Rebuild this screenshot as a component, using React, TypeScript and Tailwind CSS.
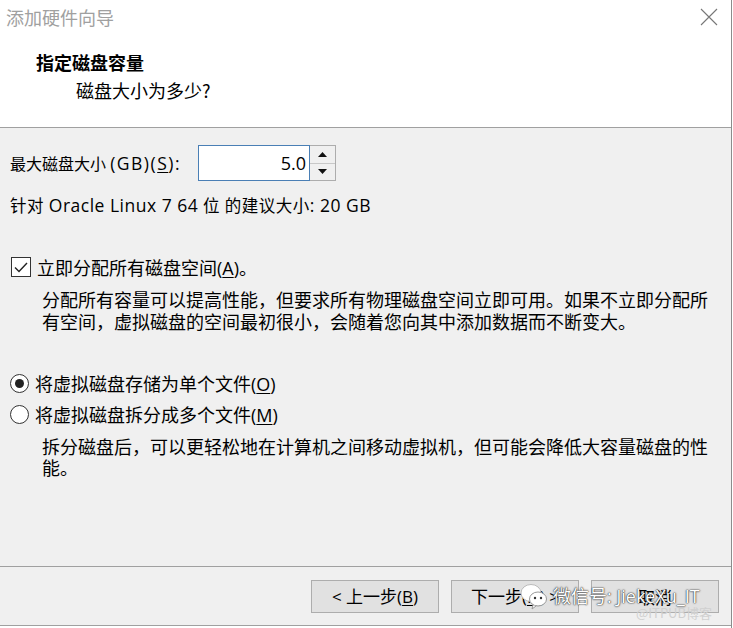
import React from 'react';

const latin = "[font-family:'Open_Sans','Noto_Sans_CJK_SC',sans-serif]";
const cjk = "[font-family:'Noto_Sans_CJK_SC','Open_Sans',sans-serif]";

function Key({ k }: { k: string }) {
  return (
    <span className={latin}>
      (<span className="underline underline-offset-2">{k}</span>)
    </span>
  );
}

function Button({ children }: { children: React.ReactNode }) {
  return (
    <button className="w-[128px] h-[33px] bg-[#e1e1e1] border border-[#adadad] text-[17px] text-black flex items-center justify-center">
      {children}
    </button>
  );
}

export default function App() {
  return (
    <div className={`relative w-[733px] h-[628px] overflow-hidden flex bg-white text-black ${cjk}`}>
      <div className="w-[731px] flex flex-col">
        {/* header */}
        <div className="h-[128px] bg-white border-b border-[#a0a0a0] pt-[5px]">
          <div className="flex items-center justify-between h-[24px] pl-[6px] pr-[12px]">
            <span className="text-[18px] leading-[24px] text-[#a0a0a0]">添加硬件向导</span>
            <svg width="20" height="18" viewBox="0 0 20 18" className="text-[#777]">
              <path d="M2 1 L18 17 M18 1 L2 17" stroke="currentColor" strokeWidth="1.1" fill="none" />
            </svg>
          </div>
          <div className="mt-[21px] ml-[36px] text-[18px] leading-[24px] font-bold">指定磁盘容量</div>
          <div className="mt-[4px] ml-[76px] text-[18px] leading-[24px]">磁盘大小为多少?</div>
        </div>

        {/* body */}
        <div className="h-[438px] bg-[#f0f0f0] pt-[17px]">
          <div className="flex items-center h-[36px]">
            <span className={`ml-[10px] w-[188px] text-[16px] ${latin}`}>
              最大磁盘大小 <span className="text-[17.5px] tracking-[1.5px]">(GB)(<span className="underline underline-offset-2">S</span>):</span>
            </span>
            <div className="flex h-[36px]">
              <div className="w-[112px] h-full bg-white border border-[#4a7fb5] flex items-center justify-end pr-[3px] text-[18px] font-['Open_Sans'] leading-none">
                5.0
              </div>
              <div className="w-[26px] h-full border border-[#adadad] border-l-0 flex flex-col bg-[#f0f0f0]">
                <div className="flex-1 flex items-center justify-center border-b border-[#c8c8c8]">
                  <svg width="9" height="5" viewBox="0 0 9 5"><path d="M4.5 0 L9 5 L0 5 Z" fill="#111" /></svg>
                </div>
                <div className="flex-1 flex items-center justify-center">
                  <svg width="9" height="5" viewBox="0 0 9 5"><path d="M0 0 L9 0 L4.5 5 Z" fill="#111" /></svg>
                </div>
              </div>
            </div>
          </div>

          <div className={`mt-[13px] ml-[10px] text-[16.5px] leading-[22px] tracking-[0.5px] ${latin}`}>
            针对 <span className="text-[17.5px]">Oracle Linux 7 64</span> 位 的建议大小<span className="text-[17.5px]">: 20 GB</span>
          </div>

          <div className="mt-[39px] flex items-center h-[22px]">
            <div className="ml-[11px] w-[20px] h-[20px] border border-[#333] bg-white flex items-center justify-center">
              <svg width="14" height="11" viewBox="0 0 14 11">
                <path d="M1 5.5 L5 9.5 L13 1" stroke="#222" strokeWidth="1.4" fill="none" />
              </svg>
            </div>
            <span className="ml-[6px] text-[18px] leading-[22px]">
              立即分配所有磁盘空间<Key k="A" />。
            </span>
          </div>

          <p className="mt-[10px] ml-[42px] w-[670px] text-[18px] leading-[22px]">
            分配所有容量可以提高性能，但要求所有物理磁盘空间立即可用。如果不立即分配所有空间，虚拟磁盘的空间最初很小，会随着您向其中添加数据而不断变大。
          </p>

          <div className="mt-[40px] flex items-center h-[22px]">
            <div className="ml-[10px] w-[19px] h-[19px] rounded-full border border-[#333] bg-white flex items-center justify-center">
              <div className="w-[9px] h-[9px] rounded-full bg-[#222]" />
            </div>
            <span className="ml-[6px] text-[18px] leading-[22px]">
              将虚拟磁盘存储为单个文件<Key k="O" />
            </span>
          </div>

          <div className="mt-[9px] flex items-center h-[22px]">
            <div className="ml-[10px] w-[19px] h-[19px] rounded-full border border-[#333] bg-white" />
            <span className="ml-[6px] text-[18px] leading-[22px]">
              将虚拟磁盘拆分成多个文件<Key k="M" />
            </span>
          </div>

          <p className="mt-[11px] ml-[42px] w-[670px] text-[18px] leading-[21px]">
            拆分磁盘后，可以更轻松地在计算机之间移动虚拟机，但可能会降低大容量磁盘的性能。
          </p>
        </div>

        {/* footer */}
        <div className="h-[59px] bg-[#f0f0f0] border-t border-[#a0a0a0] pt-[13px] flex justify-end gap-[12px] pr-[12px]">
          <Button>
            <span className={latin}>&lt; 上一步(<span className="underline underline-offset-2">B</span>)</span>
          </Button>
          <Button>
            <span className={latin}>下一步(<span className="underline underline-offset-2">N</span>) &gt;</span>
          </Button>
          <Button>
            <span>取消</span>
          </Button>
        </div>
        <div className="h-px bg-[#a0a0a0]" />
        <div className="flex-1 bg-white" />
      </div>
      <div className="w-px bg-[#8c8c8c]" />
      <div className="w-px bg-white" />

      {/* watermark overlay */}
      <div className="absolute left-[519px] top-[582px] flex items-center pointer-events-none">
        <svg width="30" height="28" viewBox="0 0 30 28">
          <ellipse cx="12" cy="11" rx="10" ry="8.5" fill="#fff" stroke="#bbb" strokeWidth="1" />
          <ellipse cx="19" cy="17" rx="8.5" ry="7" fill="#fff" stroke="#999" strokeWidth="1" />
          <circle cx="16" cy="16" r="1.2" fill="#333" />
          <circle cx="22" cy="16" r="1.2" fill="#333" />
          <path d="M14 23 L13 27 L17 24" fill="#fff" stroke="#999" strokeWidth="1" />
        </svg>
        <span className={`ml-[4px] text-[18px] text-white ${latin} [text-shadow:0_0_2px_#333,0_0_1px_#000]`}>
          微信号: JiekeXu_IT
        </span>
      </div>
      <div className="absolute left-[636px] top-[603px] text-[13px] text-[#d0d0d0] pointer-events-none">
        @ITPUB博客
      </div>
    </div>
  );
}
